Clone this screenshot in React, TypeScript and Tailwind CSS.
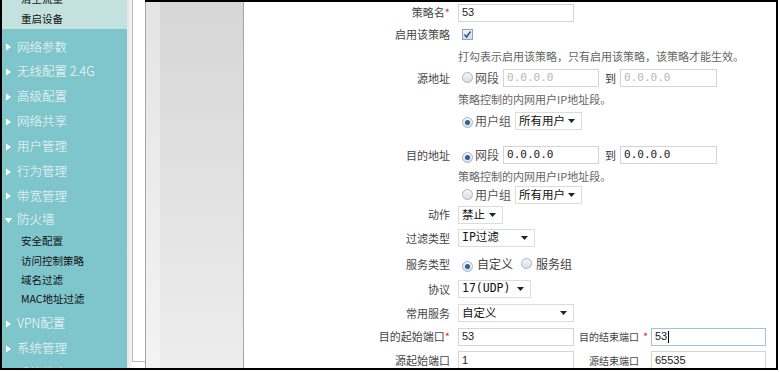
import React from 'react';

const CN = { fontFamily: '"Noto Sans CJK SC", "Liberation Sans", sans-serif' };
const MONO = { fontFamily: '"DejaVu Sans Mono", "Noto Sans CJK SC", monospace' };

const Tri = ({ down }: { down?: boolean }) => (
  <svg width="7" height="8" viewBox="0 0 7 8" className="shrink-0">
    {down ? <path d="M0 2 L7 2 L3.5 7 Z" fill="#fff" /> : <path d="M1 0.5 L6 4 L1 7.5 Z" fill="#fff" />}
  </svg>
);

const Arrow = () => (
  <svg width="7" height="4" viewBox="0 0 7 4" className="shrink-0">
    <path d="M0 0 L7 0 L3.5 4 Z" fill="#222" />
  </svg>
);

const MainItem = ({ label, h, down }: { label: string; h: string; down?: boolean }) => (
  <div className={`shrink-0 flex items-center gap-[5px] pl-[3px] text-[12.5px] font-light text-[#f7fcfc] ${h}`} style={CN}>
    <Tri down={down} />
    <span>{label}</span>
  </div>
);

const SubItem = ({ label, h, extra = '' }: { label: string; h: string; extra?: string }) => (
  <div className={`shrink-0 flex items-center pl-[19px] text-[10.5px] text-[#111] ${h} ${extra}`} style={CN}>
    {label}
  </div>
);

const Radio = ({ on }: { on?: boolean }) => (
  <span className="inline-flex w-[11px] h-[11px] rounded-full border border-[#a9b4c2] bg-gradient-to-b from-[#f4f6f9] to-[#d9dfe7] items-center justify-center shrink-0">
    {on && <span className="w-[5px] h-[5px] rounded-full bg-[#2f5f94]" />}
  </span>
);

const Input = ({ w, value, disabled, mono, focus }: { w: string; value: string; disabled?: boolean; mono?: boolean; focus?: boolean }) => (
  <div
    className={`shrink-0 h-[18px] ${w} border ${focus ? 'border-[#9ec3e6]' : 'border-[#d4d4d4]'} bg-white flex items-center px-[3px] text-[11px] ${disabled ? 'text-[#b8b8b8]' : 'text-[#222]'}`}
    style={mono ? MONO : { fontFamily: '"Liberation Sans", sans-serif' }}
  >
    {value}
    {focus && <span className="w-px h-[12px] bg-black ml-px" />}
  </div>
);

const Select = ({ w, value, mono }: { w: string; value: string; mono?: boolean }) => (
  <div className={`shrink-0 h-[18px] ${w} border border-[#dcdcdc] bg-white flex items-center justify-between pl-[3px] pr-[6px] text-[11.5px] text-[#111]`} style={mono ? MONO : CN}>
    <span>{value}</span>
    <Arrow />
  </div>
);

const Row = ({ label, star, h, children }: { label?: string; star?: boolean; h: string; children?: React.ReactNode }) => (
  <div className={`shrink-0 flex items-center ${h}`}>
    <div className="w-[207px] text-right text-[11px] text-[#444] pr-[1px]" style={CN}>
      {label}
      {star && <span className="text-[#e0303a] text-[11px]">*</span>}
    </div>
    <div className="ml-[7px] flex items-center text-[11px] text-[#444]" style={CN}>
      {children}
    </div>
  </div>
);

const Help = ({ text, h }: { text: string; h: string }) => (
  <div className={`shrink-0 flex items-center pl-[214px] text-[11px] text-[#666] ${h}`} style={CN}>
    {text}
  </div>
);

export default function App() {
  return (
    <div className="w-[780px] h-[372px] bg-white overflow-hidden">
      <div className="w-[778px] h-[370px] flex border-l-2 border-r-2 border-b-2 border-black overflow-hidden">
        {/* 左侧菜单 */}
        <div className="w-[125px] shrink-0 bg-[#7fc5cc] overflow-hidden flex flex-col">
          <div className="shrink-0 h-[29px] bg-[#c3e2df] flex flex-col overflow-hidden">
            <SubItem label="清空流量" h="h-[20px]" extra="-mt-[11px]" />
            <SubItem label="重启设备" h="h-[20px]" />
          </div>
          <div className="shrink-0 h-[6px]" />
          <MainItem label="网络参数" h="h-[24px]" />
          <MainItem label="无线配置 2.4G" h="h-[25px]" />
          <MainItem label="高级配置" h="h-[25px]" />
          <MainItem label="网络共享" h="h-[25px]" />
          <MainItem label="用户管理" h="h-[25px]" />
          <MainItem label="行为管理" h="h-[25px]" />
          <MainItem label="带宽管理" h="h-[24px]" />
          <MainItem label="防火墙" h="h-[23px]" down />
          <SubItem label="安全配置" h="h-[20px]" />
          <SubItem label="访问控制策略" h="h-[20px]" />
          <SubItem label="域名过滤" h="h-[18px]" />
          <SubItem label="MAC地址过滤" h="h-[20px]" />
          <div className="shrink-0 h-[2px]" />
          <MainItem label="VPN配置" h="h-[25px]" />
          <MainItem label="系统管理" h="h-[25px]" />
          <MainItem label="系统状态" h="h-[25px]" />
        </div>
        {/* 滚动条区域 */}
        <div className="w-[5px] shrink-0 bg-gradient-to-r from-[#e6e6e6] to-[#f6f6f6]" />
        <div className="w-[13px] shrink-0 h-[362px] bg-white border-l border-b border-[#b9b9b9]" />
        {/* 主区域 */}
        <div className="flex-1 flex border-t-2 border-black">
          <div className="w-[99px] shrink-0 flex border-l border-r border-[#a7a7a7]">
            <div className="w-[14px] bg-gradient-to-b from-[#e4e4e4] to-[#f3f3f3]" />
            <div className="flex-1 bg-gradient-to-b from-[#d6d6d6] to-[#ededed]" />
          </div>
          <div className="flex-1 bg-white flex flex-col overflow-hidden">
            <Row label="策略名" star h="h-[21px]">
              <Input w="w-[116px]" value="53" />
            </Row>
            <Row label="启用该策略" h="h-[23px]">
              <span className="ml-[4px] w-[11px] h-[11px] border border-[#8fa3bd] bg-gradient-to-b from-[#eef2f8] to-[#d3dcea] flex items-center justify-center">
                <svg width="9" height="9" viewBox="0 0 9 9">
                  <path d="M1.5 4.5 L3.6 7 L7.6 1.5" stroke="#2d4f86" strokeWidth="1.4" fill="none" />
                </svg>
              </span>
            </Row>
            <Help text="打勾表示启用该策略，只有启用该策略，该策略才能生效。" h="h-[21px]" />
            <Row label="源地址" h="h-[22px]">
              <span className="ml-[4px]"><Radio /></span>
              <span className="ml-[2px] text-[12px] text-[#555]">网段</span>
              <span className="ml-[4px]"><Input w="w-[96px]" value="0.0.0.0" mono disabled /></span>
              <span className="ml-[6px] mr-[4px] text-[11px] text-[#333]">到</span>
              <Input w="w-[97px]" value="0.0.0.0" mono disabled />
            </Row>
            <Help text="策略控制的内网用户IP地址段。" h="h-[21px]" />
            <Row h="h-[21px]">
              <span className="ml-[4px]"><Radio on /></span>
              <span className="ml-[2px] text-[12px] text-[#555]">用户组</span>
              <span className="ml-[4px]"><Select w="w-[67px]" value="所有用户" /></span>
            </Row>
            <div className="shrink-0 h-[13px]" />
            <Row label="目的地址" h="h-[22px]">
              <span className="ml-[4px]"><Radio on /></span>
              <span className="ml-[2px] text-[12px] text-[#555]">网段</span>
              <span className="ml-[4px]"><Input w="w-[96px]" value="0.0.0.0" mono /></span>
              <span className="ml-[6px] mr-[4px] text-[11px] text-[#333]">到</span>
              <Input w="w-[97px]" value="0.0.0.0" mono />
            </Row>
            <Help text="策略控制的内网用户IP地址段。" h="h-[20px]" />
            <Row h="h-[18px]">
              <span className="ml-[4px]"><Radio /></span>
              <span className="ml-[2px] text-[12px] text-[#555]">用户组</span>
              <span className="ml-[4px]"><Select w="w-[67px]" value="所有用户" /></span>
            </Row>
            <Row label="动作" h="h-[21px]">
              <Select w="w-[45px]" value="禁止" />
            </Row>
            <Row label="过滤类型" h="h-[26px]">
              <Select w="w-[77px]" value="IP过滤" mono />
            </Row>
            <Row label="服务类型" h="h-[26px]">
              <span className="ml-[4px]"><Radio on /></span>
              <span className="ml-[4px] text-[12px] text-[#444]">自定义</span>
              <span className="ml-[8px]"><Radio /></span>
              <span className="ml-[4px] text-[12px] text-[#444]">服务组</span>
            </Row>
            <Row label="协议" h="h-[24px]">
              <Select w="w-[73px]" value="17(UDP)" mono />
            </Row>
            <Row label="常用服务" h="h-[24px]">
              <Select w="w-[116px]" value="自定义" />
            </Row>
            <Row label="目的起始端口" star h="h-[23px]">
              <Input w="w-[116px]" value="53" />
              <div className="w-[66px] shrink-0 text-right whitespace-nowrap text-[10px] text-[#444] pr-[1px]">目的结束端口</div>
              <span className="shrink-0 text-[#e0303a] text-[11px] w-[11px] pl-[3px]">*</span>
              <Input w="w-[115px]" value="53" focus />
            </Row>
            <Row label="源起始端口" h="h-[24px]">
              <Input w="w-[116px]" value="1" />
              <div className="w-[66px] shrink-0 text-right whitespace-nowrap text-[10px] text-[#444] pr-[1px]">源结束端口</div>
              <span className="shrink-0 w-[11px]" />
              <Input w="w-[115px]" value="65535" />
            </Row>
          </div>
        </div>
      </div>
    </div>
  );
}
